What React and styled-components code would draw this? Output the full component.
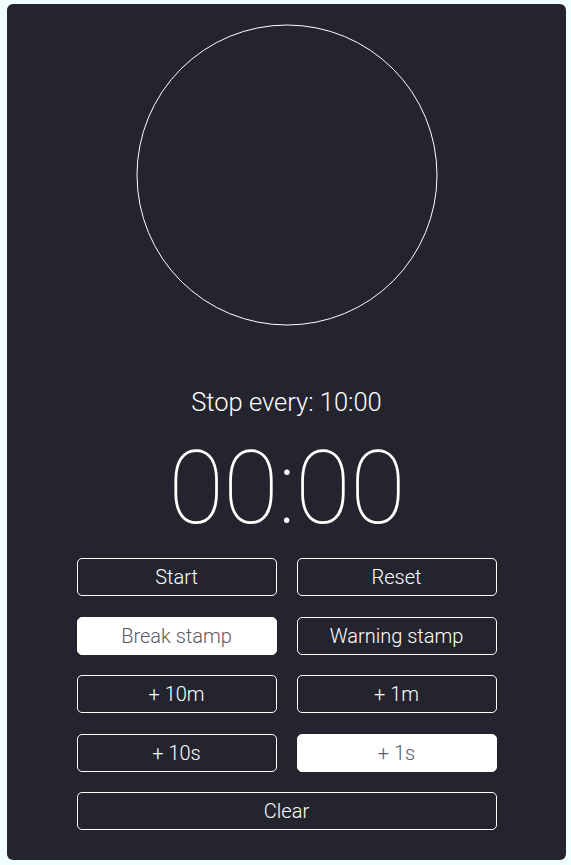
import React from "react";
import styled, { createGlobalStyle } from "styled-components";

const Global = createGlobalStyle`
  html, body { margin: 0; padding: 0; background: #f0ffff; }
  body { font-family: Roboto, "Noto Sans", sans-serif; }
`;

const Page = styled.div`
  padding: 4px 5px 5px 7px;
`;

const Panel = styled.div`
  width: 559px;
  height: 856px;
  box-sizing: border-box;
  background: #24242f;
  border-radius: 6px;
  display: flex;
  flex-direction: column;
  align-items: center;
  padding-top: 20px;
  color: #fff;
`;

const Dial = styled.svg`
  display: block;
  width: 302px;
  height: 302px;
`;

const Interval = styled.div`
  margin-top: 60px;
  font-size: 25.5px;
  font-weight: 300;
  line-height: 32px;
`;

const Clock = styled.div`
  margin-top: 15px;
  font-size: 102px;
  font-weight: 100;
  line-height: 110px;
  letter-spacing: -1px;
`;

const Grid = styled.div`
  margin-top: 15px;
  width: 420px;
  display: grid;
  grid-template-columns: 1fr 1fr;
  column-gap: 20px;
  row-gap: 20.5px;
`;

const Button = styled.button`
  height: 38px;
  box-sizing: border-box;
  border: 1px solid #fff;
  border-radius: 5px;
  background: ${(p) => (p.$active ? "#fff" : "transparent")};
  color: ${(p) => (p.$active ? "#5a5a66" : "#fff")};
  font-family: Roboto, sans-serif;
  font-weight: 300;
  font-size: 20px;
  padding: 0;
  grid-column: ${(p) => (p.$wide ? "1 / span 2" : "auto")};
`;

export default function App() {
  return (
    <>
      <Global />
      <Page>
        <Panel>
          <Dial viewBox="0 0 302 302">
            <circle cx="151" cy="151" r="150" fill="none" stroke="#fff" strokeWidth="1" />
          </Dial>
          <Interval>Stop every: 10:00</Interval>
          <Clock>00:00</Clock>
          <Grid>
            <Button>Start</Button>
            <Button>Reset</Button>
            <Button $active>Break stamp</Button>
            <Button>Warning stamp</Button>
            <Button>+ 10m</Button>
            <Button>+ 1m</Button>
            <Button>+ 10s</Button>
            <Button $active>+ 1s</Button>
            <Button $wide>Clear</Button>
          </Grid>
        </Panel>
      </Page>
    </>
  );
}
